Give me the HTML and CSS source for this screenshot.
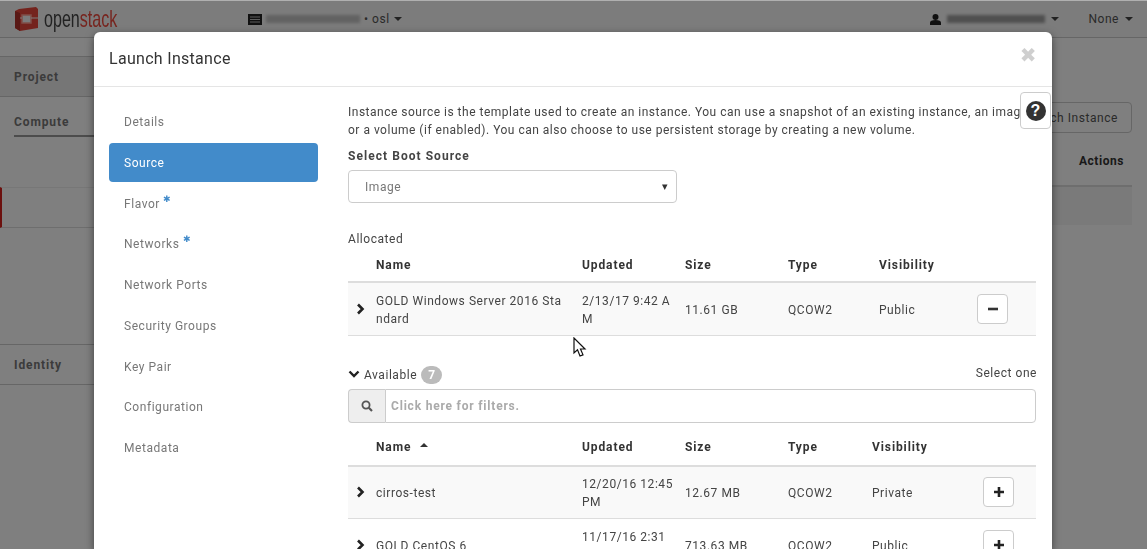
FILE: index.html
```html
<!DOCTYPE html>
<html lang="en">
<head>
  <meta charset="UTF-8" />
  <title>Launch Instance</title>
  <link rel="stylesheet" href="styles.css">
</head>
<body>
  <header class="topbar">
    <div class="brand">
      <svg class="brand-icon" width="24" height="24" viewBox="0 0 24 24">
        <path d="M5 2 L22 0 L24 2 V21 L6 24 L1 21 V4 Z" fill="#e8463a"/>
        <path d="M8 8 H17 V16 H8 Z" fill="#f7f7f7" stroke="#ff9c90" stroke-width="1.5"/>
        <path d="M0 11 H8 M17 11 H24" stroke="#f8f8f8" stroke-width="1"/>
        <path d="M1 4 V21 L6 24 V6 Z" fill="#b3302a"/>
      </svg>
      <span class="brand-name">open<b>stack</b></span>
    </div>
    <div class="project-pick">
      <svg width="14" height="11" viewBox="0 0 14 11"><path d="M0 0H14V11H0Z" fill="#222"/><path d="M2 3H12M2 5.5H12M2 8H12" stroke="#bbb" stroke-width="1"/></svg>
      <span class="smudge smudge-project"></span>
      <span>• osl</span>
      <i class="caret"></i>
    </div>
    <div class="user-pick">
      <svg width="11" height="11" viewBox="0 0 11 11"><circle cx="5.5" cy="3" r="3" fill="#222"/><path d="M0 11V8.5C0 7 2 6 5.5 6S11 7 11 8.5V11Z" fill="#222"/></svg>
      <span class="smudge smudge-user"></span>
      <i class="caret"></i>
    </div>
    <div class="region-pick"><span>None</span><i class="caret"></i></div>
  </header>

  <div class="layout">
    <aside class="sidebar">
      <div class="side-project">Project</div>
      <div class="side-compute">Compute</div>
      <div class="side-active"></div>
      <div class="side-identity">Identity</div>
    </aside>
    <main class="content">
      <div class="page-actions"><button class="launch-btn">Launch Instance</button></div>
      <div class="bg-head">Actions</div>
      <div class="bg-row"></div>
    </main>
  </div>

  <div class="backdrop"></div>

  <div class="modal">
    <div class="modal-head">
      <h4>Launch Instance</h4>
      <span class="close">✖</span>
    </div>
    <div class="modal-body">
      <nav class="steps">
        <a>Details</a>
        <a class="on">Source</a>
        <a>Flavor <sup>✱</sup></a>
        <a>Networks <sup>✱</sup></a>
        <a>Network Ports</a>
        <a>Security Groups</a>
        <a>Key Pair</a>
        <a>Configuration</a>
        <a>Metadata</a>
      </nav>
      <section class="pane">
        <p class="intro">Instance source is the template used to create an instance. You can use a snapshot of an existing instance, an image, or a volume (if enabled). You can also choose to use persistent storage by creating a new volume.</p>
        <label class="field-label">Select Boot Source</label>
        <div class="select"><span>Image</span><i>▾</i></div>

        <div class="allocated">Allocated</div>
        <table class="grid grid-top">
          <colgroup><col class="c-x"><col class="c-name"><col class="c-up"><col class="c-size"><col class="c-type"><col class="c-vis"><col></colgroup>
          <thead><tr><th></th><th>Name</th><th>Updated</th><th>Size</th><th>Type</th><th>Visibility</th><th></th></tr></thead>
          <tbody>
            <tr>
              <td><svg class="chev" width="9" height="12" viewBox="0 0 9 12"><path d="M2 1.5 L6.5 6 L2 10.5" fill="none" stroke="#222" stroke-width="2.6"/></svg></td>
              <td class="brk">GOLD Windows Server 2016 Standard</td>
              <td class="brk date">2/13/17 9:42 AM</td>
              <td>11.61 GB</td><td>QCOW2</td><td>Public</td>
              <td><button class="mini"><svg width="10" height="10" viewBox="0 0 10 10"><path d="M0 5H10" stroke="#333" stroke-width="2.6"/></svg></button></td>
            </tr>
          </tbody>
        </table>

        <div class="avail-bar">
          <div class="avail-left">
            <svg width="12" height="9" viewBox="0 0 12 9"><path d="M1.5 1.5 L6 6 L10.5 1.5" fill="none" stroke="#222" stroke-width="2.4"/></svg>
            <span>Available</span><span class="badge">7</span>
          </div>
          <span class="pick-hint">Select one</span>
        </div>
        <div class="filter">
          <span class="filter-icon"><svg width="12" height="12" viewBox="0 0 12 12"><circle cx="5" cy="5" r="3.6" fill="none" stroke="#555" stroke-width="1.8"/><path d="M7.8 7.8 L11 11" stroke="#555" stroke-width="2.2"/></svg></span>
          <span class="filter-input">Click here for filters.</span>
        </div>

        <table class="grid grid-avail">
          <colgroup><col class="c-x"><col class="c-name"><col class="c-up"><col class="c-size"><col class="c-type2"><col class="c-vis2"><col></colgroup>
          <thead><tr><th></th><th>Name <i class="sort"></i></th><th>Updated</th><th>Size</th><th>Type</th><th>Visibility</th><th></th></tr></thead>
          <tbody>
            <tr>
              <td><svg class="chev" width="9" height="12" viewBox="0 0 9 12"><path d="M2 1.5 L6.5 6 L2 10.5" fill="none" stroke="#222" stroke-width="2.6"/></svg></td>
              <td class="brk">cirros-test</td>
              <td class="brk date">12/20/16 12:45 PM</td>
              <td>12.67 MB</td><td>QCOW2</td><td>Private</td>
              <td><button class="mini"><svg width="10" height="10" viewBox="0 0 10 10"><path d="M0 5H10M5 0V10" stroke="#222" stroke-width="2.6"/></svg></button></td>
            </tr>
            <tr>
              <td><svg class="chev" width="9" height="12" viewBox="0 0 9 12"><path d="M2 1.5 L6.5 6 L2 10.5" fill="none" stroke="#222" stroke-width="2.6"/></svg></td>
              <td class="brk">GOLD CentOS 6</td>
              <td class="brk date">11/17/16 2:31 PM</td>
              <td>713.63 MB</td><td>QCOW2</td><td>Public</td>
              <td><button class="mini"><svg width="10" height="10" viewBox="0 0 10 10"><path d="M0 5H10M5 0V10" stroke="#222" stroke-width="2.6"/></svg></button></td>
            </tr>
          </tbody>
        </table>
      </section>
    </div>
    <button class="help"><span>?</span></button>
  </div>

  <svg class="pointer" width="14" height="21" viewBox="0 0 14 21"><path d="M1 1 V16 L4.5 12.8 L7 19 L10 17.8 L7.5 12 H12 Z" fill="#fff" stroke="#111" stroke-width="1.2"/></svg>
</body>
</html>
```

FILE: styles.css
```css
html, body {
  margin: 0;
  height: 549px;
  overflow: hidden;
}
body {
  background: #fff;
  color: #444;
  font-family: Roboto, "Liberation Sans", sans-serif;
  font-size: 12px;
  letter-spacing: .55px;
}

/* dashboard behind the modal */
.topbar {
  height: 36px;
  border-top: 1px solid #fff;
  border-bottom: 1px solid #ccc;
  background: #f8f8f8;
  display: flex;
  align-items: center;
  padding-right: 14px;
  color: #555;
}
.brand {
  width: 248px;
  padding-left: 14px;
  box-sizing: border-box;
  display: flex;
  align-items: center;
  gap: 6px;
}
.brand-name {
  font-family: "Liberation Sans Narrow", "Liberation Sans", sans-serif;
  font-size: 24px;
  letter-spacing: 0;
  color: #444;
  transform: scaleX(.67);
  transform-origin: left;
}
.brand-name b { font-weight: 400; color: #ee4a3e; }
.project-pick, .user-pick, .region-pick {
  display: flex;
  align-items: center;
  gap: 4px;
  font-size: 12px;
}
.project-pick { width: 683px; }
.user-pick { width: 158px; gap: 6px; }
.region-pick { gap: 6px; }
.caret {
  display: inline-block;
  border-top: 4px solid #444;
  border-left: 4px solid transparent;
  border-right: 4px solid transparent;
}
.smudge {
  display: inline-block;
  height: 8px;
  filter: blur(1.5px);
}
.smudge-project { width: 94px; background: #c4c4c4; }
.smudge-user { width: 98px; background: #a0a0a0; }

.layout { display: flex; }
.sidebar {
  width: 200px;
  padding-top: 18px;
  font-weight: 700;
  color: #777;
  letter-spacing: .9px;
}
.side-project {
  height: 39px;
  line-height: 40px;
  padding-left: 14px;
  border-top: 1px solid #ccc;
  border-bottom: 1px solid #ccc;
  background: #ececec;
}
.side-compute {
  margin-left: 14px;
  height: 38px;
  line-height: 50px;
  border-bottom: 2px solid #999;
}
.side-active {
  height: 39px;
  margin-top: 50px;
  border-left: 2px solid #d8211d;
  border-top: 1px solid #eee;
  border-bottom: 1px solid #ddd;
}
.side-identity {
  margin-top: 116px;
  height: 39px;
  line-height: 40px;
  padding-left: 14px;
  border-top: 1px solid #ccc;
  border-bottom: 1px solid #ccc;
}
.content {
  flex: 1;
  padding: 64px 15px 0 0;
  display: flex;
  flex-direction: column;
  align-items: flex-end;
}
.launch-btn {
  height: 31px;
  width: 120px;
  border: 1px solid #ccc;
  border-radius: 4px;
  background: #fff;
  color: #555;
  font: inherit;
  letter-spacing: inherit;
  padding: 0 13px 0 0;
  text-align: right;
  white-space: nowrap;
}
.bg-head {
  align-self: stretch;
  height: 54px;
  line-height: 56px;
  text-align: right;
  padding-right: 8px;
  font-weight: 700;
  color: #333;
  border-bottom: 2px solid #ddd;
  box-sizing: border-box;
}
.bg-row {
  align-self: stretch;
  height: 38px;
  background: #f5f5f5;
}
.backdrop {
  position: fixed;
  inset: 0;
  background: rgba(0,0,0,.5);
  border-top: 1px solid #b0b0b0;
}

/* modal */
.modal {
  position: absolute;
  left: 94px;
  top: 32px;
  width: 958px;
  height: 517px;
  background: #fff;
  border-radius: 6px 6px 0 0;
  box-shadow: 0 3px 9px rgba(0,0,0,.5);
  overflow: hidden;
}
.modal-head {
  height: 54px;
  border-bottom: 1px solid #e5e5e5;
  padding-left: 15px;
  display: flex;
  align-items: center;
  justify-content: space-between;
}
.modal-head h4 {
  margin: -2px 0 0;
  font-size: 16px;
  font-weight: 400;
  letter-spacing: .3px;
  color: #333;
}
.close {
  margin: -8px 15px 0 0;
  color: #cfcfcf;
  font-size: 20px;
  font-family: "DejaVu Sans", sans-serif;
  font-weight: 700;
}
.modal-body { display: flex; }
.steps {
  width: 209px;
  margin: 15px 0 0 15px;
  display: flex;
  flex-direction: column;
  gap: 1.75px;
  flex: none;
}
.steps a {
  height: 39px;
  line-height: 41px;
  padding-left: 15px;
  color: #777;
  border-radius: 4px;
}
.steps a.on { background: #428bca; color: #fff; }
.steps sup {
  color: #428bca;
  font-size: 9px;
  line-height: 0;
  vertical-align: 6px;
}
.pane {
  width: 688px;
  margin-left: 30px;
  padding-top: 16px;
  flex: none;
}
.intro {
  margin: 0;
  line-height: 18px;
  height: 36px;
  width: 690px;
  letter-spacing: .5px;
}
.field-label {
  display: block;
  margin-top: 8px;
  font-weight: 700;
  line-height: 19px;
  letter-spacing: 1.05px;
}
.select {
  width: 329px;
  height: 33px;
  margin-top: 4px;
  box-sizing: border-box;
  border: 1px solid #ccc;
  border-radius: 4px;
  padding: 0 7px 0 16px;
  display: flex;
  align-items: center;
  justify-content: space-between;
  color: #777;
}
.select i { font-style: normal; font-size: 11px; color: #333; }
.allocated { margin-top: 27px; line-height: 18px; }
.grid {
  width: 688px;
  table-layout: fixed;
  border-collapse: collapse;
}
.c-x { width: 20px; }
.c-name { width: 206px; }
.c-up { width: 103px; }
.c-size { width: 103px; }
.c-type { width: 91px; }
.c-vis { width: 98px; }
.c-type2 { width: 84px; }
.c-vis2 { width: 111px; }
.grid th {
  height: 34px;
  padding: 0 8px;
  box-sizing: border-box;
  border-bottom: 2px solid #ddd;
  text-align: left;
  font-weight: 700;
  letter-spacing: .9px;
  color: #333;
}
.grid-avail th { height: 37px; }
.grid th:first-child, .grid td:first-child { padding: 0 0 0 8px; }
.grid td {
  height: 53px;
  padding: 2px 8px 0;
  box-sizing: border-box;
  line-height: 18px;
  border-bottom: 1px solid #ddd;
  vertical-align: middle;
}
.grid tbody tr:nth-child(odd) td { background: #f9f9f9; }
.brk { word-break: break-all; }
.grid td.date { padding-right: 4px; }
.chev { display: block; }
.mini {
  width: 31px;
  height: 30px;
  margin-top: -2px;
  background: #fff;
  border: 1px solid #ccc;
  border-radius: 4px;
  padding: 0;
  display: flex;
  align-items: center;
  justify-content: center;
}
.sort {
  display: inline-block;
  margin: 0 0 4px 5px;
  border-bottom: 4px solid #333;
  border-left: 4px solid transparent;
  border-right: 4px solid transparent;
}
.avail-bar {
  margin-top: 28px;
  height: 22px;
  display: flex;
  align-items: center;
  justify-content: space-between;
}
.avail-left { display: flex; align-items: center; gap: 4px; }
.pick-hint { margin: -4px -1px 0 0; }
.badge {
  background: #bbb;
  color: #fff;
  font-weight: 700;
  font-size: 12px;
  border-radius: 10px;
  width: 21px;
  height: 18px;
  line-height: 18px;
  text-align: center;
  letter-spacing: 0;
}
.filter {
  display: flex;
  height: 34px;
  margin: 3px 0 6px;
}
.filter-icon {
  width: 37px;
  box-sizing: border-box;
  background: #eee;
  border: 1px solid #ccc;
  border-right: 0;
  border-radius: 4px 0 0 4px;
  display: flex;
  align-items: center;
  justify-content: center;
}
.filter-input {
  flex: 1;
  border: 1px solid #ccc;
  border-radius: 0 4px 4px 0;
  padding-left: 5px;
  line-height: 32px;
  font-weight: 700;
  letter-spacing: .8px;
  color: #aaa;
}
.help {
  position: absolute;
  right: 1px;
  top: 60px;
  width: 31px;
  height: 37px;
  background: #fff;
  border: 1px solid #ccc;
  border-radius: 4px;
  padding: 0;
  display: flex;
  align-items: center;
  justify-content: center;
}
.help span {
  width: 20px;
  height: 20px;
  border-radius: 50%;
  background: #333;
  color: #fff;
  font: 700 16px/20px "Liberation Sans", sans-serif;
  text-align: center;
}
.pointer {
  position: absolute;
  left: 573px;
  top: 337px;
}
```
